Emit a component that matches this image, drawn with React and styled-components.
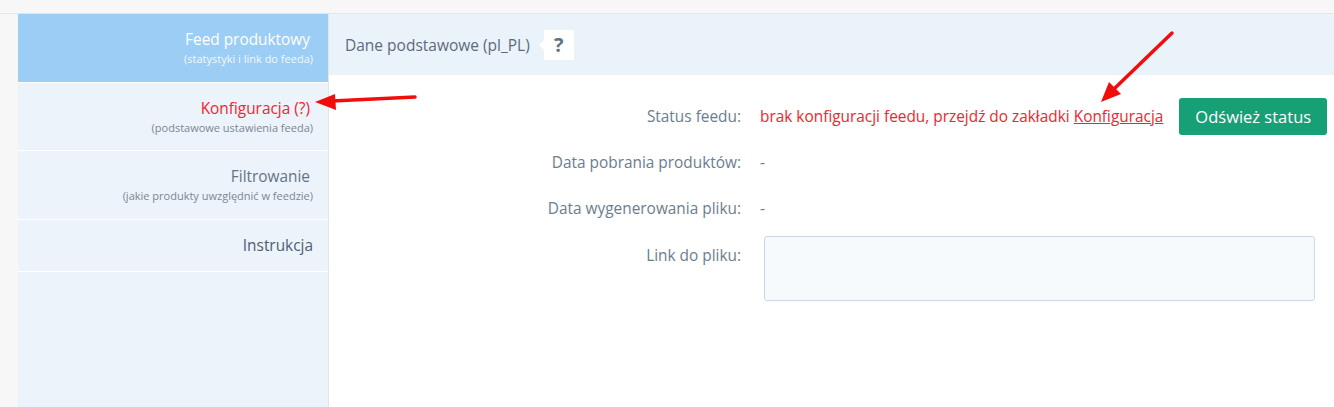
import styled, { createGlobalStyle } from 'styled-components';

const GlobalStyle = createGlobalStyle`
  html, body {
    margin: 0;
    padding: 0;
    background: #f7f7f7;
    font-family: 'Open Sans', 'Noto Sans', sans-serif;
  }
  * { box-sizing: border-box; }
`;

const Page = styled.div`
  position: relative;
  width: 1334px;
  height: 407px;
  overflow: hidden;
  padding-top: 13px;
`;

const Frame = styled.div`
  display: flex;
  height: 394px;
  border-top: 1px solid #e4e6e8;
  padding-left: 18px;
`;

const Sidebar = styled.nav`
  width: 311px;
  flex-shrink: 0;
  background: #ecf3fa;
  border-right: 1px solid #dfe6ed;
  box-shadow: 1px 0 2px rgba(0, 0, 0, 0.04);
`;

const NavItem = styled.div`
  padding: 16px 15px ${props => props.compact ? '15px' : '15.6px'} 10px;
  text-align: right;
  border-bottom: 1px solid #ffffff;
  background: ${props => props.active ? '#9ccdf4' : 'transparent'};
`;

const NavTitle = styled.div`
  font-size: 15.4px;
  line-height: 20px;
  padding-right: ${props => props.shifted ? '3px' : '0'};
  font-weight: ${props => props.active ? 500 : 400};
  color: ${props => props.color || '#5f6f82'};
`;

const NavSub = styled.div`
  margin-top: 2px;
  font-size: 11px;
  line-height: 14px;
  color: ${props => props.light ? '#f2f8fe' : '#7b8793'};
`;

const Main = styled.main`
  flex: 1;
  background: #ffffff;
`;

const Header = styled.div`
  display: flex;
  align-items: center;
  height: 61px;
  padding-left: 16px;
  background: #ebf3fa;
  font-size: 15.5px;
  color: #5d6b7c;
`;

const HelpBox = styled.span`
  position: relative;
  margin-left: 14px;
  width: 30px;
  height: 30px;
  display: flex;
  align-items: center;
  justify-content: center;
  background: #ffffff;
  font-size: 20px;
  font-weight: 700;
  color: #5f7389;

  &::before {
    content: '';
    position: absolute;
    left: -5px;
    top: 10px;
    border-top: 5px solid transparent;
    border-bottom: 5px solid transparent;
    border-right: 5px solid #ffffff;
  }
`;

const Content = styled.div`
  padding-top: 23px;
  display: flex;
  flex-direction: column;
  gap: 9px;
`;

const Row = styled.div`
  display: grid;
  grid-template-columns: 412px 1fr;
  column-gap: 19px;
  align-items: ${props => props.top ? 'start' : 'center'};
  min-height: 37px;
`;

const Label = styled.div`
  text-align: right;
  font-size: 15.4px;
  line-height: 20px;
  color: #6b7d90;
  padding-top: ${props => props.top ? '10px' : '0'};
`;

const Value = styled.div`
  display: flex;
  align-items: center;
  font-size: 15.4px;
  line-height: 20px;
  color: #6b7d90;
`;

const ErrorText = styled.span`
  color: #f0262c;

  a {
    color: #f0262c;
    text-decoration: underline;
  }
`;

const RefreshButton = styled.button`
  margin-left: 16px;
  height: 37px;
  padding: 0 16px;
  border: none;
  border-radius: 3px;
  background: #179f76;
  color: #ffffff;
  font-family: inherit;
  font-size: 16.5px;
  font-weight: 500;
  cursor: pointer;
`;

const LinkBox = styled.div`
  margin-left: 4px;
  width: 551px;
  height: 65px;
  background: #f6fafd;
  border: 1px solid #ccd9e4;
  border-radius: 3px;
`;

const Annotations = styled.svg`
  position: absolute;
  left: 0;
  top: 0;
  pointer-events: none;
`;

const navItems = [
  { title: 'Feed produktowy', sub: '(statystyki i link do feeda)', active: true },
  { title: 'Konfiguracja (?)', sub: '(podstawowe ustawienia feeda)', color: '#f0262c' },
  { title: 'Filtrowanie', sub: '(jakie produkty uwzględnić w feedzie)', color: '#647387' },
  { title: 'Instrukcja', color: '#4b6079' },
];

export default function App() {
  return (
    <>
      <GlobalStyle />
      <Page>
        <Frame>
          <Sidebar>
            {navItems.map(item => (
              <NavItem key={item.title} active={item.active} compact={!item.sub}>
                <NavTitle
                  active={item.active}
                  shifted={!!item.sub}
                  color={item.active ? '#ffffff' : item.color}
                >
                  {item.title}
                </NavTitle>
                {item.sub && <NavSub light={item.active}>{item.sub}</NavSub>}
              </NavItem>
            ))}
          </Sidebar>
          <Main>
            <Header>
              Dane podstawowe (pl_PL)
              <HelpBox>?</HelpBox>
            </Header>
            <Content>
              <Row>
                <Label>Status feedu:</Label>
                <Value>
                  <ErrorText>
                    brak konfiguracji feedu, przejdź do zakładki <a href="#">Konfiguracja</a>
                  </ErrorText>
                  <RefreshButton>Odśwież status</RefreshButton>
                </Value>
              </Row>
              <Row>
                <Label>Data pobrania produktów:</Label>
                <Value>-</Value>
              </Row>
              <Row>
                <Label>Data wygenerowania pliku:</Label>
                <Value>-</Value>
              </Row>
              <Row top>
                <Label top>Link do pliku:</Label>
                <LinkBox />
              </Row>
            </Content>
          </Main>
        </Frame>
        <Annotations width="1334" height="407">
          <line x1="415" y1="97" x2="332" y2="101" stroke="#f20d0d" strokeWidth="3.5" strokeLinecap="round" />
          <polygon points="315,102 335,94 336,110" fill="#f20d0d" />
          <line x1="1172" y1="33" x2="1115" y2="88" stroke="#f20d0d" strokeWidth="3.5" strokeLinecap="round" />
          <polygon points="1101,102 1121,94 1109,82" fill="#f20d0d" />
        </Annotations>
      </Page>
    </>
  );
}
